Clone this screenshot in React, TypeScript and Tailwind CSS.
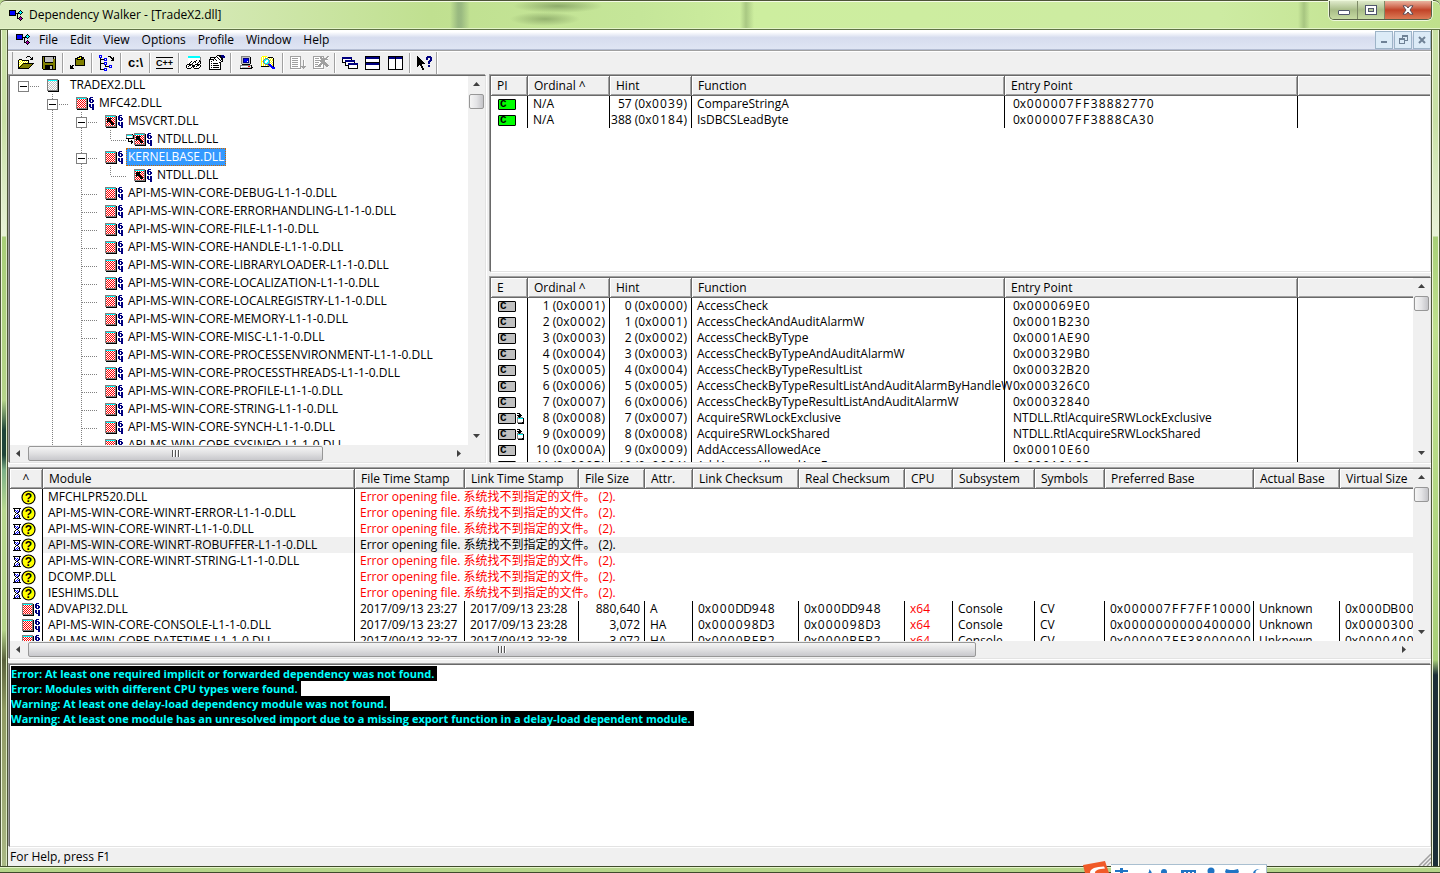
import React from "react";

const PALETTE: Record<string, string> = {
  k: "#000000",
  w: "#ffffff",
  b: "#0000ff",
  n: "#000080",
  c: "#00ffff",
  r: "#ff0000",
  g: "#808080",
  s: "#c0c0c0",
  y: "#ffff00",
  o: "#808000",
  t: "#008080",
  m: "#a000a0",
  d: "#a0a0a0",
};

/** Draws a small bitmap; each character of a row is one palette pixel. */
function Pixels({ rows, className = "" }: { rows: string[]; className?: string }) {
  const width = Math.max(...rows.map((r) => r.length));
  const rects: React.ReactNode[] = [];
  rows.forEach((row, y) => {
    let x = 0;
    while (x < row.length) {
      const ch = row[x];
      let end = x + 1;
      while (end < row.length && row[end] === ch) end++;
      if (PALETTE[ch]) {
        rects.push(<rect key={`${x}-${y}`} x={x} y={y} width={end - x} height={1} fill={PALETTE[ch]} />);
      }
      x = end;
    }
  });
  return (
    <svg width={width} height={rows.length} shapeRendering="crispEdges" className={`shrink-0 ${className}`} aria-hidden="true">
      {rects}
    </svg>
  );
}

const APP_ICON = [
  "kkkkkkk....k..",
  "kbbbbbk...kck.",
  "kbbbbbk..kccck",
  "kbbbbbkkkkkck.",
  "kbbbbbk.k..k..",
  "kkkkkkk.k.....",
  "........k..k..",
  "........k.kmk.",
  "........kkmmmk",
  "..........kmk.",
  "...........k..",
];

const OPEN = [
  ".........kkk....",
  "........k...k.k.",
  ".............kk.",
  ".kkk........kkk.",
  "kywykkkkkkk.....",
  "kwywywywywk.....",
  "kywywywywyk.....",
  "kwywykkkkkkkkkkk",
  "kywykoooooooook.",
  "kwykoooooooook..",
  "kykoooooooook...",
  "kkoooooooook....",
  "kkkkkkkkkkk.....",
];
const SAVE = [
  "kkkkkkkkkkkkkk",
  "kokssssssssksk",
  "kokssssssssksk",
  "kokssssssssook",
  "kokssssssssook",
  "kokssssssssook",
  "kookkkkkkkkook",
  "kooooooooooook",
  "kooooooooooook",
  "kookkkkkkkkook",
  "kookkkkksskook",
  "kookkkkksskook",
  "kookkkkksskook",
  ".kkkkkkkkkkkkk",
];
const PASTE = [
  ".........kkk....",
  ".......kkkykkk..",
  ".....kkkyyykkk..",
  ".....kokkkkkkok.",
  ".....kooooooook.",
  ".....kooooooook.",
  ".....kooooooook.",
  ".....kooooooook.",
  ".....kooooooook.",
  "k.kk.kkkkkkkkkk.",
  "kkk.............",
  "kkk.............",
  "kkkk............",
  "................",
];
const TREE = [
  "bbb.............",
  "bwb......kkk....",
  "bbb........kk.k.",
  ".k...bbb....kkk.",
  ".kkkkbwb.....kk.",
  ".k...bbb....kkk.",
  ".k..............",
  ".k...bbb........",
  ".kkkkbwb........",
  ".k...bbb........",
  ".k....k...bbb...",
  ".k....kkkkbwb...",
  ".k........bbb...",
  ".k...bbb........",
  ".kkkkbwb........",
  ".....bbb........",
];
const GLASSES = [
  "..cccccccccccc..",
  "..ccccccccccccg.",
  "..wwwwwwwwwwwwg.",
  "..wwwwwwwwwwwwg.",
  "..wwwwwwwwkwwkg.",
  "..wwwkwwkkwwwkk.",
  "..wwkwwkwkwwkwk.",
  "..wkwwkwwwwkwwk.",
  ".kkkkkgwwkkkkk..",
  "kwwkkwkkkwwkkwk.",
  "kwkwwwkkkwkwwwk.",
  "kwwwwk.kwwwwwk..",
  ".kkkk...kkkkk...",
];
const PROPERTIES = [
  "........kkkknnn.",
  ".......kwwkknnnn",
  ".kkkkkkwkwwkknnn",
  ".kwwwkwwwkwwkk..",
  "kkkkkwkwwwkwkk..",
  "kwwwkwwkwwwkwk..",
  "kwkwwwwwwwwwkk..",
  "kwwwwwwwwwkk....",
  "kwkwkkkkkwwk....",
  "kwwwwwwwwwwk....",
  "kwkwkkkkkkwk....",
  "kwwwwwwwwwwk....",
  "kwkwkkkkkkwk....",
  "kwwwwwwwwwwk....",
  "kkkkkkkkkkkk....",
];
const COMPUTER = [
  "..ggggggggg...",
  "..gssssssssk..",
  "..gsnnnnnnsk..",
  "..gsnbbbbnsk..",
  "..gsnbbbbnsk..",
  "..gsnbbbwnsk..",
  "..gsnnnnnnsk..",
  "..gssssssssk..",
  "...kkkkkkkk...",
  ".gggggggggggk.",
  ".gwwwwwwwrrwk.",
  ".gwssssssssskk",
  ".kkkkkkkkkkkk.",
];
const FIND = [
  ".yyyyy..........",
  "ywywywykkkkk....",
  "ywywgggwywywk...",
  "ywygcccgwywyk...",
  "ywgccwwcgywyk...",
  "yygcwwwcgwywk...",
  "ywgcwwccgywyk...",
  "ywygcccggwywk...",
  "ywywgggbbbwyk...",
  "ywywywygbbbyk...",
  "kkkkkkkkgbbbk...",
  "..........bbbb..",
  "...........bbb..",
];
const SORT_OFF = [
  "ddddddddddd.....",
  "dwwwwwwwwwd.....",
  "dwddddddwwd.....",
  "dwwwwwwwwwd.....",
  "dwddddddwwd..dw.",
  "dwwwwwwwwwd..dw.",
  "dwddddddwwd..dw.",
  "dwwwwwwwwwd..dw.",
  "dwddddddwwd..dw.",
  "dwwwwwwwwwd..dw.",
  "dwddddddwwdddddd",
  "dwwwwwwwwwd.ddd.",
  "ddddddddddd..d..",
  ".wwwwwwwwwww....",
];
const CLEAR_OFF = [
  "ddddddddddd...dd",
  "dwwwwwwddwd..ddw",
  "dwddddwdddddddw.",
  "dwwwwwwwddddddd.",
  "dwddddddddddwww.",
  "dwwwwwwdddddw...",
  "dwddddwwddddd...",
  "dwwwwwwddddddd..",
  "dwdddwdddwddddd.",
  "dwwwwdddwwd.dddd",
  "dwddddddwwd..ddw",
  "dwwwwwwwwwd...w.",
  "ddddddddddd.....",
  ".wwwwwwwwwww....",
];
const CASCADE = [
  "nnnnnnnnnn......",
  "nnnnnnnnnn......",
  "kwwwwwwwwk......",
  "kwwnnnnnnnnnn...",
  "kwwnnnnnnnnnn...",
  "kkkkwwwwwwwwk...",
  "...kwwnnnnnnnnnn",
  "...kwwnnnnnnnnnn",
  "...kkkkwwwwwwwwk",
  "......kwwwwwwwwk",
  "......kwwwwwwwwk",
  "......kkkkkkkkkk",
];
const TILE_H = [
  "kkkkkkkkkkkkkkk",
  "knnnnnnnnnnnnnk",
  "knnnnnnnnnnnnnk",
  "kwwwwwwwwwwwwwk",
  "kwwwwwwwwwwwwwk",
  "kwwwwwwwwwwwwwk",
  "kkkkkkkkkkkkkkk",
  "knnnnnnnnnnnnnk",
  "knnnnnnnnnnnnnk",
  "kwwwwwwwwwwwwwk",
  "kwwwwwwwwwwwwwk",
  "kwwwwwwwwwwwwwk",
  "kwwwwwwwwwwwwwk",
  "kkkkkkkkkkkkkkk",
];
const TILE_V = [
  "kkkkkkkkkkkkkkk",
  "knnnnnnknnnnnnk",
  "knnnnnnknnnnnnk",
  "kwwwwwwkwwwwwwk",
  "kwwwwwwkwwwwwwk",
  "kwwwwwwkwwwwwwk",
  "kwwwwwwkwwwwwwk",
  "kwwwwwwkwwwwwwk",
  "kwwwwwwkwwwwwwk",
  "kwwwwwwkwwwwwwk",
  "kwwwwwwkwwwwwwk",
  "kwwwwwwkwwwwwwk",
  "kwwwwwwkwwwwwwk",
  "kkkkkkkkkkkkkkk",
];
const HELP = [
  "k.........nnnn..",
  "kk.......nnnnnn.",
  "kkk......nn..nn.",
  "kkkk.....nn..nn.",
  "kkkkk.......nnn.",
  "kkkkkk.....nnn..",
  "kkkkkkk....nn...",
  "kkkkkkkk...nn...",
  "kkkkk...........",
  "kk.kk......nn...",
  "k...kk.....nn...",
  "....kk..........",
  ".....kk.........",
  ".....kk.........",
];
const HOURGLASS = [
  "kkkkkkkk",
  ".kwwwwk.",
  ".kbwbwk.",
  ".kwbwbk.",
  "..kwbk..",
  "...kk...",
  "..kwwk..",
  ".kwwbwk.",
  ".kwbwbk.",
  ".kbwbwk.",
  "kkkkkkkk",
];
const FORWARD = [
  ".kkk....",
  "...kk...",
  ".kkkkk..",
  "..kkk...",
  ".ggkggg.",
  ".gccccck",
  ".gwwwwwk",
  ".gwwwwwk",
  ".gwwwwwk",
  ".gggggkk",
  "..kkkkkk",
];
const DUPLICATE = [
  "ggggggk.",
  "gcccccsk",
  "gwwwwwsk",
  "gwwwwwsk",
  "kkkkkkkk",
  "..k.....",
  "..k..k..",
  "..kkkkk.",
  ".....kk.",
  ".....k..",
];

const ARROW = [
  "...........",
  "...........",
  "...........",
  "..kkkkk....",
  "..kkkk.....",
  "..kkkk.....",
  "..kkkkk....",
  "..k..kkk...",
  "......kkk..",
  "......kkk..",
  "...........",
];
const SIXTY_FOUR = [
  ".nnn.",
  "nn...",
  "nnnn.",
  "nn.nn",
  "nn.nn",
  ".nnn.",
  ".....",
  "nn.nn",
  "nn.nn",
  "nn.nn",
  ".nnnn",
  "...nn",
  "...nn",
];

/** Composes a module bitmap: frame, dithered body, optional arrow and 64-bit mark. */
function moduleRows(body: string, arrow: boolean, wide: boolean): string[] {
  const rows: string[] = [];
  for (let y = 0; y < 13; y++) {
    let row = "";
    for (let x = 0; x < 12; x++) {
      let p = (x + y) % 2 ? body : "w";
      if (y === 12) p = x === 0 ? "." : "k";
      else if (x === 11) p = y === 0 ? "." : "k";
      else if (y === 0 || x === 0 || x === 10 || y === 11) p = "g";
      else if (y === 1) p = "c";
      else if (arrow && ARROW[y] && ARROW[y][x] === "k") p = "k";
      row += p;
    }
    rows.push(wide ? row + "." + SIXTY_FOUR[y] : row);
  }
  return rows;
}

const MOD_ROOT = moduleRows("s", false, false);
const MOD_RED = moduleRows("r", false, true);
const MOD_ARROW = moduleRows("r", true, true);

function Missing() {
  return (
    <svg width="15" height="15" className="shrink-0" aria-hidden="true">
      <circle cx="7.5" cy="7.5" r="6.5" fill="#ffff00" stroke="#000" strokeWidth="1.2" />
      <text x="7.5" y="12" textAnchor="middle" fontSize="12" fontWeight="700" fontFamily="Liberation Sans">
        ?
      </text>
    </svg>
  );
}

function FnBadge({ tone, forwarded }: { tone: string; forwarded?: boolean }) {
  return (
    <span className="flex items-center">
      <span className={`flex h-[11px] w-[18px] shrink-0 items-center rounded-[1px] border border-black pl-px font-['Liberation_Mono',monospace] text-[11px] leading-[9px] font-bold ${tone}`}>
        C
      </span>
      {forwarded && <Pixels rows={FORWARD} />}
    </span>
  );
}

/** Hexadecimal value with every digit in a cell of equal width. */
function Hex({ v }: { v: string }) {
  return (
    <>
      0x
      {v.split("").map((d, i) => (
        <span key={i} className="inline-block w-2 text-center">
          {d}
        </span>
      ))}
    </>
  );
}

function Num({ n, pad = 4 }: { n: number; pad?: number }) {
  return (
    <>
      {n} (<Hex v={n.toString(16).toUpperCase().padStart(pad, "0")} />)
    </>
  );
}

type Guide = "none" | "line" | "tee" | "elbow" | "first" | "open" | "openFirst";

function TreeGuide({ kind }: { kind: Guide }) {
  const dash = { stroke: "#808080", strokeDasharray: "1 1" };
  const boxed = kind === "open" || kind === "openFirst" || kind === "first";
  const horizontal = boxed || kind === "tee" || kind === "elbow";
  return (
    <svg width="29" height="18" className="shrink-0" shapeRendering="crispEdges" aria-hidden="true">
      {(kind === "line" || kind === "tee" || kind === "open") && <line x1="13.5" x2="13.5" y1="0" y2="18" {...dash} />}
      {(kind === "elbow" || kind === "openFirst") && <line x1="13.5" x2="13.5" y1="0" y2="10" {...dash} />}
      {kind === "openFirst" && <line x1="13.5" x2="13.5" y1="10" y2="18" {...dash} />}
      {horizontal && <line x1="14" x2="29" y1="10.5" y2="10.5" {...dash} />}
      {boxed && (
        <>
          <rect x="8.5" y="5.5" width="10" height="10" fill="#fff" stroke="#808080" />
          <line x1="10" x2="17" y1="10.5" y2="10.5" stroke="#000" />
        </>
      )}
    </svg>
  );
}

type Node = { label: string; guides: Guide[]; icon: string[]; dup?: boolean; selected?: boolean };
const TREE_ROWS: Node[] = [
  { label: "TRADEX2.DLL", guides: ["first"], icon: MOD_ROOT },
  { label: "MFC42.DLL", guides: ["none", "openFirst"], icon: MOD_RED },
  { label: "MSVCRT.DLL", guides: ["none", "line", "open"], icon: MOD_ARROW },
  { label: "NTDLL.DLL", guides: ["none", "line", "line", "elbow"], icon: MOD_ARROW, dup: true },
  { label: "KERNELBASE.DLL", guides: ["none", "line", "open"], icon: MOD_RED, selected: true },
  { label: "NTDLL.DLL", guides: ["none", "line", "line", "elbow"], icon: MOD_ARROW },
  ...[
    "DEBUG",
    "ERRORHANDLING",
    "FILE",
    "HANDLE",
    "LIBRARYLOADER",
    "LOCALIZATION",
    "LOCALREGISTRY",
    "MEMORY",
    "MISC",
    "PROCESSENVIRONMENT",
    "PROCESSTHREADS",
    "PROFILE",
    "STRING",
    "SYNCH",
    "SYSINFO",
  ].map((n): Node => ({ label: `API-MS-WIN-CORE-${n}-L1-1-0.DLL`, guides: ["none", "line", "tee"], icon: MOD_RED })),
];

const ARROWS: Record<string, string> = {
  up: "M0 5 L3.5 1 L7 5 Z",
  down: "M0 1 L3.5 5 L7 1 Z",
  left: "M5 0 L1 3.5 L5 7 Z",
  right: "M1 0 L5 3.5 L1 7 Z",
};

function ScrollArrow({ dir }: { dir: "up" | "down" | "left" | "right" }) {
  return (
    <button aria-label={`Scroll ${dir}`} className="flex size-[17px] shrink-0 items-center justify-center">
      <svg width="7" height="7" aria-hidden="true">
        <path d={ARROWS[dir]} fill="#404040" />
      </svg>
    </button>
  );
}

function VScroll() {
  return (
    <div className="flex w-[17px] shrink-0 flex-col bg-[#f0f0f0]">
      <ScrollArrow dir="up" />
      <div className="flex-1 px-px pt-px">
        <div className="h-[15px] rounded-[2px] border border-[#979797] bg-linear-to-r from-[#f5f5f5] via-[#e4e4e6] to-[#c4c4c8]" />
      </div>
      <ScrollArrow dir="down" />
    </div>
  );
}

function HScroll({ size }: { size: string }) {
  return (
    <div className="flex h-[17px] shrink-0 bg-[#f0f0f0]">
      <ScrollArrow dir="left" />
      <div className="flex-1 p-px">
        <div className={`flex h-[15px] items-center justify-center gap-px rounded-[2px] border border-[#979797] bg-linear-to-b from-[#f5f5f5] via-[#e0e0e2] to-[#c8c8cc] ${size}`}>
          <span className="h-[7px] w-[2px] border-l border-[#555] bg-white" />
          <span className="h-[7px] w-[2px] border-l border-[#555] bg-white" />
          <span className="h-[7px] w-[2px] border-l border-[#555] bg-white" />
        </div>
      </div>
      <ScrollArrow dir="right" />
      <span className="w-[17px]" />
    </div>
  );
}

const PANE =
  "overflow-hidden border border-t-[#696969] border-r-[#e3e3e3] border-b-[#e3e3e3] border-l-[#696969] bg-white shadow-[-1px_-1px_#a0a0a0,1px_1px_#fff]";
const TABLE = "w-full table-fixed border-separate border-spacing-0 whitespace-nowrap";

function Th({ children, className = "pl-[6px] text-left", last }: { children?: React.ReactNode; className?: string; last?: boolean }) {
  return (
    <th
      className={`h-5 overflow-hidden border-b border-[#696969] bg-[#f0f0f0] py-0 pr-0 font-normal ${
        last ? "shadow-[inset_1px_1px_#fff,inset_0_-1px_#a0a0a0]" : "border-r shadow-[inset_1px_1px_#fff,inset_-1px_-1px_#a0a0a0]"
      } ${className}`}
    >
      {children}
    </th>
  );
}

function Td({ children, className = "overflow-hidden pl-[5px]" }: { children?: React.ReactNode; className?: string }) {
  return <td className={`h-4 border-r border-black py-0 leading-4 ${className}`}>{children}</td>;
}

function FunctionTable({ first, children }: { first: string; children: React.ReactNode }) {
  return (
    <table className={TABLE}>
      <colgroup>
        <col className="w-[37px]" />
        <col className="w-[82px]" />
        <col className="w-[82px]" />
        <col className="w-[313px]" />
        <col className="w-[293px]" />
        <col />
      </colgroup>
      <thead>
        <tr>
          <Th>{first}</Th>
          <Th>Ordinal ^</Th>
          <Th>Hint</Th>
          <Th>Function</Th>
          <Th>Entry Point</Th>
          <Th last />
        </tr>
      </thead>
      <tbody>{children}</tbody>
    </table>
  );
}

const IMPORTS = [
  { hint: 57, name: "CompareStringA", entry: "000007FF38882770" },
  { hint: 388, name: "IsDBCSLeadByte", entry: "000007FF3888CA30" },
];

const EXPORTS: { name: string; entry?: string; forward?: string }[] = [
  { name: "AccessCheck", entry: "000069E0" },
  { name: "AccessCheckAndAuditAlarmW", entry: "0001B230" },
  { name: "AccessCheckByType", entry: "0001AE90" },
  { name: "AccessCheckByTypeAndAuditAlarmW", entry: "000329B0" },
  { name: "AccessCheckByTypeResultList", entry: "00032B20" },
  { name: "AccessCheckByTypeResultListAndAuditAlarmByHandleW", entry: "000326C0" },
  { name: "AccessCheckByTypeResultListAndAuditAlarmW", entry: "00032840" },
  { name: "AcquireSRWLockExclusive", forward: "NTDLL.RtlAcquireSRWLockExclusive" },
  { name: "AcquireSRWLockShared", forward: "NTDLL.RtlAcquireSRWLockShared" },
  { name: "AddAccessAllowedAce", entry: "00010E60" },
  { name: "AddAccessAllowedAceEx", entry: "00010A60" },
];

const MISSING = [
  { name: "MFCHLPR520.DLL", delay: false },
  { name: "API-MS-WIN-CORE-WINRT-ERROR-L1-1-0.DLL", delay: true },
  { name: "API-MS-WIN-CORE-WINRT-L1-1-0.DLL", delay: true },
  { name: "API-MS-WIN-CORE-WINRT-ROBUFFER-L1-1-0.DLL", delay: true, current: true },
  { name: "API-MS-WIN-CORE-WINRT-STRING-L1-1-0.DLL", delay: true },
  { name: "DCOMP.DLL", delay: true },
  { name: "IESHIMS.DLL", delay: true },
];

const FOUND = [
  { name: "ADVAPI32.DLL", size: "880,640", attr: "A", sum: "000DD948", base: "000007FF7FF10000", virt: "000DB000" },
  { name: "API-MS-WIN-CORE-CONSOLE-L1-1-0.DLL", size: "3,072", attr: "HA", sum: "000098D3", base: "0000000000400000", virt: "00003000" },
  { name: "API-MS-WIN-CORE-DATETIME-L1-1-0.DLL", size: "3,072", attr: "HA", sum: "0000BEB2", base: "000007FF38000000", virt: "00004000" },
];

const LOG = [
  "Error: At least one required implicit or forwarded dependency was not found.",
  "Error: Modules with different CPU types were found.",
  "Warning: At least one delay-load dependency module was not found.",
  "Warning: At least one module has an unresolved import due to a missing export function in a delay-load dependent module.",
];

type Tool = { label: string; rows?: string[]; text?: "cmd" | "cpp" };
const TOOL_GROUPS: Tool[][] = [
  [
    { label: "Open", rows: OPEN },
    { label: "Save", rows: SAVE },
  ],
  [{ label: "Copy", rows: PASTE }],
  [{ label: "Auto Expand", rows: TREE }],
  [{ label: "Full Paths", text: "cmd" }],
  [{ label: "Undecorate C++ Functions", text: "cpp" }],
  [
    { label: "View Module", rows: GLASSES },
    { label: "Properties", rows: PROPERTIES },
  ],
  [
    { label: "System Information", rows: COMPUTER },
    { label: "Search Order", rows: FIND },
  ],
  [
    { label: "Start Profiling", rows: SORT_OFF },
    { label: "Stop Profiling", rows: CLEAR_OFF },
  ],
  [
    { label: "Cascade", rows: CASCADE },
    { label: "Tile Horizontally", rows: TILE_H },
    { label: "Tile Vertically", rows: TILE_V },
  ],
  [{ label: "Context Help", rows: HELP }],
];

function ToolIcon({ tool }: { tool: Tool }) {
  if (tool.rows) return <Pixels rows={tool.rows} />;
  if (tool.text === "cmd") return <span className="font-['Liberation_Sans',sans-serif] text-[13px] leading-3 font-bold">c:\</span>;
  return (
    <span className="border-y border-black font-['Liberation_Sans',sans-serif] text-[9px] leading-[10px] font-bold">C++</span>
  );
}

function TitleBar() {
  return (
    <header className="flex h-[30px] items-start justify-between rounded-t-[6px] border-t border-[#4d5438] bg-[radial-gradient(45px_7px_at_558px_5px,#5f7a4588,transparent),radial-gradient(35px_7px_at_545px_18px,#5f7a4577,transparent),linear-gradient(90deg,transparent_450px,#7f9f7599_458px,#7f9f7599_461px,transparent_470px),linear-gradient(90deg,transparent_740px,#8aa86a88_746px,transparent_754px),linear-gradient(90deg,transparent_1298px,#8aa86a88_1304px,transparent_1310px),linear-gradient(90deg,#dcebc0,#d3e8b2_220px,#c0e090_430px,#c5e699_640px,#cdee9f_760px,#cdeba2_1220px,#bfe08c)] pr-2 pl-[9px] shadow-[inset_0_1px_#f4fbe6,inset_0_-1px_#5f7346,inset_0_-2px_#e4f4c8]">
      <div className="flex h-7 items-center gap-[6px]">
        <Pixels rows={APP_ICON} />
        <h1>Dependency Walker - [TradeX2.dll]</h1>
      </div>
      <div className="flex h-[19px] rounded-b-[5px] border border-t-0 border-[#555f48] shadow-[0_0_0_1px_#eef8dc]">
        <button aria-label="Minimize" className="flex w-[28px] items-center justify-center rounded-bl-[4px] border-r border-[#7d8a66] bg-linear-to-b from-[#dfeacb] via-[#a9bd88] to-[#c7dba2] pt-1">
          <span className="h-[5px] w-[12px] rounded-[1px] border border-[#50566b] bg-white" />
        </button>
        <button aria-label="Restore" className="flex w-[27px] items-center justify-center border-r border-[#7d8a66] bg-linear-to-b from-[#dfeacb] via-[#a9bd88] to-[#c7dba2]">
          <svg width="12" height="10" shapeRendering="crispEdges" aria-hidden="true">
            <rect x=".5" y=".5" width="11" height="9" fill="#fff" stroke="#50566b" />
            <rect x="3.5" y="3.5" width="5" height="3" fill="#b5c79a" stroke="#50566b" />
          </svg>
        </button>
        <button aria-label="Close" className="flex w-[46px] items-center justify-center rounded-br-[4px] bg-linear-to-b from-[#e9b3a0] via-[#c14328] to-[#dc7a55]">
          <svg width="12" height="10" aria-hidden="true">
            <path d="M1 .8h3.2L6 3 7.800 .8H11L8 5l3 4.200H7.800L6 7 4.200 9.200H1L4 5Z" fill="#fff" stroke="#5a4a55" />
          </svg>
        </button>
      </div>
    </header>
  );
}

function MenuBar() {
  const child = "flex h-[18px] w-[18px] items-center justify-center border border-[#9db4c8] bg-[#dcebf7]";
  return (
    <div className="flex h-[20px] shrink-0 items-center border-b border-[#b4bdd3] bg-linear-to-b from-white from-10% via-[#d6dcee] via-40% to-[#dfe5f4]">
      <Pixels rows={APP_ICON} className="mr-px ml-2" />
      <nav className="flex flex-1 pl-[2px]">
        {["File", "Edit", "View", "Options", "Profile", "Window", "Help"].map((m) => (
          <button key={m} className="px-[6px]">
            {m}
          </button>
        ))}
      </nav>
      <div className="flex gap-px">
        <button aria-label="Minimize document" className={child}>
          <svg width="8" height="8" aria-hidden="true">
            <rect x="1" y="5" width="6" height="2" fill="#6f8296" />
          </svg>
        </button>
        <button aria-label="Restore document" className={child}>
          <svg width="9" height="9" shapeRendering="crispEdges" fill="none" stroke="#6f8296" aria-hidden="true">
            <path d="M3.500 3V.5h5v5H6M3 1.500h6" />
            <path d="M.5 3.500h5v5h-5zM.5 4.500h5" />
          </svg>
        </button>
        <button aria-label="Close document" className={child}>
          <svg width="8" height="8" stroke="#6f8296" strokeWidth="2" aria-hidden="true">
            <path d="M1 1l6 6M7 1l-6 6" />
          </svg>
        </button>
      </div>
    </div>
  );
}

function Toolbar() {
  return (
    <div className="flex h-6 shrink-0 items-center border-t border-[#a0a0a0] bg-[#f0f0f0] pl-1 shadow-[inset_0_1px_#fff]">
      <span className="mr-px h-[22px] w-px bg-[#a0a0a0]" />
      {TOOL_GROUPS.map((group, i) => (
        <div key={i} className="flex items-center">
          {i > 0 && <span className="mx-[2px] h-[20px] w-[2px] border-l border-[#a0a0a0] bg-white" />}
          {group.map((tool) => (
            <button key={tool.label} aria-label={tool.label} className="flex h-[22px] w-[23px] items-center justify-center">
              <ToolIcon tool={tool} />
            </button>
          ))}
        </div>
      ))}
      <span className="h-[22px] w-[2px] border-l border-[#a0a0a0] bg-white" />
    </div>
  );
}

function ModuleList() {
  return (
    <table className={TABLE}>
      <colgroup>
        <col className="w-[33px]" />
        <col className="w-[312px]" />
        <col className="w-[110px]" />
        <col className="w-[114px]" />
        <col className="w-[66px]" />
        <col className="w-[48px]" />
        <col className="w-[106px]" />
        <col className="w-[106px]" />
        <col className="w-[48px]" />
        <col className="w-[82px]" />
        <col className="w-[70px]" />
        <col className="w-[149px]" />
        <col className="w-[86px]" />
        <col />
      </colgroup>
      <thead>
        <tr>
          <Th className="text-center">^</Th>
          <Th>Module</Th>
          <Th>File Time Stamp</Th>
          <Th>Link Time Stamp</Th>
          <Th>File Size</Th>
          <Th>Attr.</Th>
          <Th>Link Checksum</Th>
          <Th>Real Checksum</Th>
          <Th>CPU</Th>
          <Th>Subsystem</Th>
          <Th>Symbols</Th>
          <Th>Preferred Base</Th>
          <Th>Actual Base</Th>
          <Th last>Virtual Size</Th>
        </tr>
      </thead>
      <tbody>
        {MISSING.map((m) => (
          <tr key={m.name} className={m.current ? "bg-[#f0f0f0]" : "bg-white"}>
            <Td className={m.current ? "bg-white" : ""}>
              <span className="flex h-4 items-center justify-end pr-[6px]">
                {m.delay && <Pixels rows={HOURGLASS} />}
                <Missing />
              </span>
            </Td>
            <Td>{m.name}</Td>
            <td colSpan={12} className={`h-4 overflow-hidden py-0 pl-[5px] leading-4 ${m.current ? "" : "text-[#ff0000]"}`}>
              Error opening file. 系统找不到指定的文件。 (2).
            </td>
          </tr>
        ))}
        {FOUND.map((m) => (
          <tr key={m.name}>
            <Td className="">
              <span className="flex h-4 items-center justify-end pr-[2px]">
                <Pixels rows={MOD_RED} />
              </span>
            </Td>
            <Td>{m.name}</Td>
            <Td>2017/09/13 23:27</Td>
            <Td>2017/09/13 23:28</Td>
            <Td className="pr-1 text-right">{m.size}</Td>
            <Td>{m.attr}</Td>
            <Td>
              <Hex v={m.sum} />
            </Td>
            <Td>
              <Hex v={m.sum} />
            </Td>
            <Td className="pl-[5px] text-[#ff0000]">x64</Td>
            <Td>Console</Td>
            <Td>CV</Td>
            <Td>
              <Hex v={m.base} />
            </Td>
            <Td>Unknown</Td>
            <td className="h-4 overflow-hidden py-0 pl-[5px] leading-4">
              <Hex v={m.virt} />
            </td>
          </tr>
        ))}
      </tbody>
    </table>
  );
}

function InputMethodBar() {
  return (
    <div className="absolute right-[173px] bottom-0 flex h-[12px] w-[184px] items-start overflow-hidden">
      <svg width="28" height="12" className="shrink-0" aria-hidden="true">
        <path d="M0 4 L22 0 L26 12 L2 12 Z" fill="#f05a28" />
        <path d="M7 12 C7 7 13 6 21 5.500 L22 7.500 C16 8 12 9 12 12 Z" fill="#fff" />
      </svg>
      <div className="mt-[3px] h-[9px] flex-1 border-t border-r border-[#a9bfd0] bg-white">
        <svg width="155" height="9" fill="#1f74c4" aria-hidden="true">
          <path d="M4 5h13v2h-13zM9 3h3v6h-3z" />
          <path d="M38 4q4 3 2 5h-5q4-1 3-5z" />
          <circle cx="53" cy="7" r="3" />
          <path d="M70 5h15v4h-2v-2h-2v2h-2v-2h-2v2h-2v-2h-2v2h-3z" />
          <circle cx="100" cy="6" r="3.500" />
          <path d="M115 4l4 1h4l4-1 1 3-2 2h-10l-2-2z" />
          <path d="M149 4q-6 1-4 5h-3q0-5 7-5z" />
        </svg>
      </div>
    </div>
  );
}

export default function App() {
  return (
    <div className="relative flex h-screen flex-col overflow-hidden bg-[#b5d48a] font-['Open_Sans','Noto_Sans_CJK_SC',sans-serif] text-xs leading-4 text-black">
      <TitleBar />
      <div className="flex min-h-0 flex-1">
        <div className="w-2 shrink-0 border-x border-[#4d5438] bg-[linear-gradient(180deg,#c8e0a5_0,#c8e0a5_90px,#e8f2d8_206px,#a8cf78_207px,#b5d48a_370px,#1f4438_400px,#1f4438_425px,#7db088_440px,#b8d890_480px,#b5d48a_600px,#59613c_630px,#8f9a62_680px,#a9b884_100%)] shadow-[inset_1px_0_#eef6dc,inset_-1px_0_#dcebc4]" />
        <div className="flex min-w-0 flex-1 flex-col bg-[#f0f0f0]">
          <MenuBar />
          <Toolbar />

          <main className="flex min-h-0 flex-1 flex-col gap-[5px] pt-px pl-px">
            <div className="flex h-[388px] shrink-0 gap-1">
              <section className={`${PANE} flex w-[477px] shrink-0 flex-col`}>
                <div className="flex min-h-0 flex-1">
                  <ul className="min-w-0 flex-1 overflow-hidden">
                    {TREE_ROWS.map((n, i) => (
                      <li key={i} className="flex h-[18px] items-center">
                        {n.guides.map((g, j) => (
                          <TreeGuide key={j} kind={g} />
                        ))}
                        <span className="flex w-[29px] shrink-0 items-center">
                          {n.dup ? <Pixels rows={DUPLICATE} /> : <span className="w-2" />}
                          <Pixels rows={n.icon} />
                        </span>
                        <span
                          className={`border border-dotted px-px leading-4 whitespace-nowrap ${
                            n.selected ? "border-[#cc6600] bg-[#3399ff] text-white" : "border-transparent"
                          }`}
                        >
                          {n.label}
                        </span>
                      </li>
                    ))}
                  </ul>
                  <VScroll />
                </div>
                <HScroll size="w-[295px]" />
              </section>

              <div className="flex min-w-0 flex-1 flex-col gap-[5px]">
                <section className={`${PANE} h-[197px] shrink-0`}>
                  <FunctionTable first="PI">
                    {IMPORTS.map((f) => (
                      <tr key={f.name}>
                        <Td className="pl-[7px]">
                          <FnBadge tone="bg-[#00ff00]" />
                        </Td>
                        <Td>N/A</Td>
                        <Td className="pr-1 text-right">
                          <Num n={f.hint} />
                        </Td>
                        <Td>{f.name}</Td>
                        <Td className="overflow-hidden pl-2">
                          <Hex v={f.entry} />
                        </Td>
                        <td />
                      </tr>
                    ))}
                  </FunctionTable>
                </section>
                <section className={`${PANE} flex min-h-0 flex-1`}>
                  <div className="min-w-0 flex-1 overflow-hidden">
                    <FunctionTable first="E">
                      {EXPORTS.map((f, i) => (
                        <tr key={f.name}>
                          <Td className="pl-[7px]">
                            <FnBadge tone="bg-[#c0c0c0]" forwarded={!!f.forward} />
                          </Td>
                          <Td className="pr-1 text-right">
                            <Num n={i + 1} />
                          </Td>
                          <Td className="pr-1 text-right">
                            <Num n={i} />
                          </Td>
                          <Td className="pl-[5px]">{f.name}</Td>
                          <Td className="overflow-hidden pl-2">{f.forward ? f.forward : <Hex v={f.entry || ""} />}</Td>
                          <td />
                        </tr>
                      ))}
                    </FunctionTable>
                  </div>
                  <VScroll />
                </section>
              </div>
            </div>

            <section className={`${PANE} flex h-[191px] shrink-0 flex-col`}>
              <div className="flex min-h-0 flex-1">
                <div className="min-w-0 flex-1 overflow-hidden">
                  <ModuleList />
                </div>
                <VScroll />
              </div>
              <HScroll size="w-[948px]" />
            </section>

            <section className={`${PANE} min-h-0 flex-1 pt-px pl-px`}>
              {LOG.map((line) => (
                <p key={line} className="h-[15px] text-[11px] leading-[15px] font-bold whitespace-nowrap text-[#00ffff]">
                  <span className="inline-block h-[15px] bg-black pr-[3px]">{line}</span>
                </p>
              ))}
            </section>
          </main>

          <footer className="flex h-[19px] shrink-0 items-center justify-between pl-[2px]">
            <span>For Help, press F1</span>
            <svg width="13" height="13" className="self-end" stroke="#a0a0a0" strokeWidth="1.500" aria-hidden="true">
              <path d="M1 13L13 1M5 13L13 5M9 13L13 9" />
            </svg>
          </footer>
        </div>
        <div className="w-[9px] shrink-0 border-x border-[#4d5438] bg-[linear-gradient(180deg,#c8e0a5_0,#c8e0a5_90px,#e8f2d8_206px,#a8cf78_207px,#bfe08e_300px,#a8cf78_630px,#1c2e38_645px,#1c3038_100%)] shadow-[inset_1px_0_#eef6dc,inset_-1px_0_#eef6dc]" />
      </div>
      <div className="h-[7px] shrink-0 border-y border-[#3f4a2c] bg-[#b5d48a] shadow-[inset_0_1px_#e4f4c8]" />
      <InputMethodBar />
    </div>
  );
}
